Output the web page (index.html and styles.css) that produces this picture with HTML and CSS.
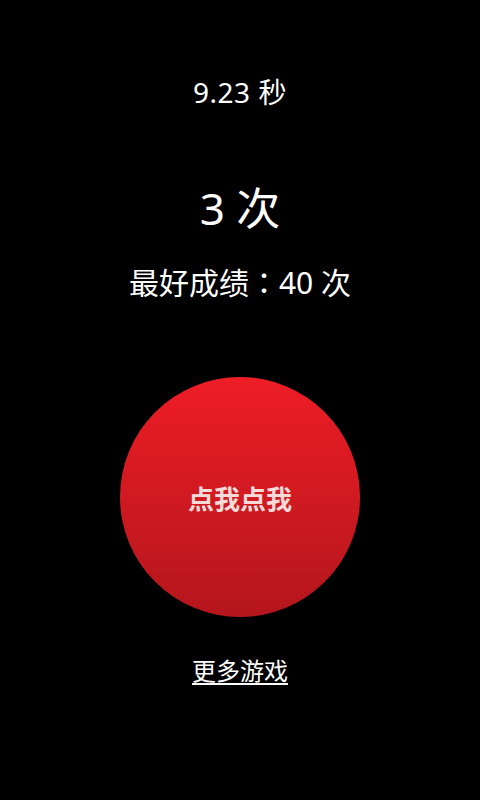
FILE: index.html
```html
<!DOCTYPE html>
<html lang="zh-CN">
<head>
<meta charset="utf-8">
<title>点我点我</title>
<link rel="stylesheet" href="styles.css">
</head>
<body>
<main class="screen">
  <div class="timer">9.23 秒</div>
  <div class="count">3 次</div>
  <div class="best">最好成绩<span class="colon" lang="zh-TW">：</span>40 次</div>
  <button class="tap">点我点我</button>
  <a class="more" href="#">更多游戏</a>
</main>
</body>
</html>
```
FILE: styles.css
```css
html, body {
  margin: 0;
  padding: 0;
  background: #000;
}
.screen {
  width: 480px;
  height: 800px;
  display: flex;
  flex-direction: column;
  align-items: center;
  color: #fff;
  font-family: "Noto Sans", "Noto Sans CJK SC", sans-serif;
}
.timer {
  margin-top: 78px;
  font-size: 28px;
  line-height: 28px;
  letter-spacing: 0.5px;
}
.count {
  margin-top: 80px;
  font-size: 44px;
  line-height: 44px;
}
.best {
  margin-top: 36px;
  font-size: 30px;
  line-height: 30px;
}
.colon {
  font-family: "Noto Sans CJK TC", sans-serif;
}
.tap {
  margin-top: 79px;
  width: 240px;
  height: 240px;
  border: none;
  border-radius: 50%;
  background: linear-gradient(#ee1d26, #b3161c);
  color: #f5dada;
  font-family: "Noto Sans CJK SC", sans-serif;
  font-size: 26px;
  font-weight: bold;
  padding: 0;
}
.more {
  margin-top: 41px;
  font-size: 24px;
  line-height: 24px;
  color: #fff;
  text-decoration: underline;
  text-underline-offset: 3px;
  font-family: "Noto Sans CJK SC", sans-serif;
}
```
